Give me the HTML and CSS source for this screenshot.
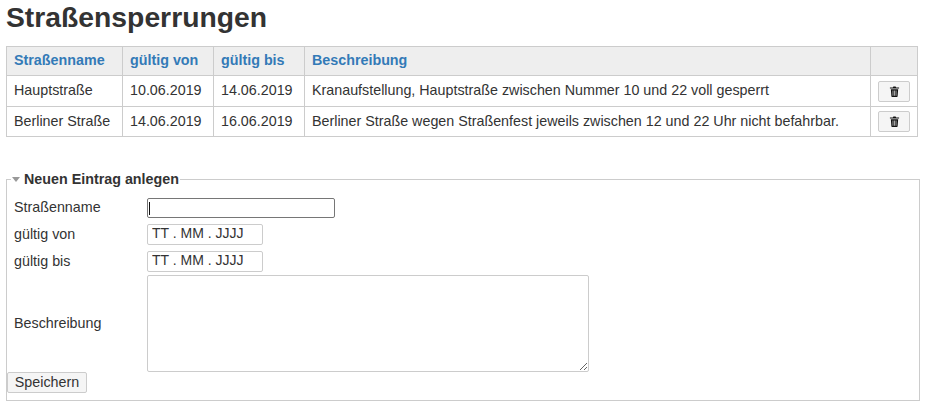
FILE: index.html
```html
<!DOCTYPE html>
<html lang="de">
<head>
<meta charset="utf-8">
<title>Straßensperrungen</title>
<link rel="stylesheet" href="styles.css">
</head>
<body>
<h1 class="title">Straßensperrungen</h1>
<table class="list">
<thead>
<tr><th class="c1">Straßenname</th><th class="c2">gültig von</th><th class="c3">gültig bis</th><th class="c4">Beschreibung</th><th class="c5"></th></tr>
</thead>
<tbody>
<tr><td>Hauptstraße</td><td>10.06.2019</td><td>14.06.2019</td><td>Kranaufstellung, Hauptstraße zwischen Nummer 10 und 22 voll gesperrt</td><td class="act"><button class="del" type="button"><svg class="trash" viewBox="0 0 12 12" width="11" height="11"><path d="M4.2 1.600 4.800.6h2.400l.6 1H11v1.200H1V1.600z"/><path fill-rule="evenodd" d="M2 3.600h8l-.6 7.600a.8.8 0 0 1-.8.8H3.400a.8.8 0 0 1-.8-.8zM4 5v5.500h.7V5zm1.650 0v5.500h.7V5zM7.300 5v5.500H8V5z"/></svg></button></td></tr>
<tr class="last"><td>Berliner Straße</td><td>14.06.2019</td><td>16.06.2019</td><td>Berliner Straße wegen Straßenfest jeweils zwischen 12 und 22 Uhr nicht befahrbar.</td><td class="act"><button class="del" type="button"><svg class="trash" viewBox="0 0 12 12" width="11" height="11"><path d="M4.2 1.600 4.800.6h2.400l.6 1H11v1.200H1V1.600z"/><path fill-rule="evenodd" d="M2 3.600h8l-.6 7.600a.8.8 0 0 1-.8.8H3.400a.8.8 0 0 1-.8-.8zM4 5v5.500h.7V5zm1.650 0v5.500h.7V5zM7.300 5v5.500H8V5z"/></svg></button></td></tr>
</tbody>
</table>
<form>
<fieldset class="box">
<legend class="legend"><span class="arrow"></span>Neuen Eintrag anlegen</legend>
<div class="rows">
<label class="lab first" for="n">Straßenname</label><span class="focus-wrap"><input class="inp wide" id="n" type="text"></span>
<label class="lab date-row" for="v">gültig von</label><input class="inp date date-row" id="v" type="text" value="TT . MM . JJJJ">
<label class="lab date-row" for="b">gültig bis</label><input class="inp date date-row" id="b" type="text" value="TT . MM . JJJJ">
<label class="lab" for="d">Beschreibung</label><textarea class="inp area" id="d"></textarea>
</div>
<button class="save" type="button">Speichern</button>
</fieldset>
</form>
</body>
</html>
```
FILE: styles.css
```css
html, body { margin: 0; padding: 0; }
body {
  padding: 0 8px 0 6px;
  background: #fff;
  color: #333;
  font: 14.3px/20px "Liberation Sans", Arial, sans-serif;
  overflow: hidden;
}
.title {
  margin: 0;
  padding-top: 1px;
  height: 46px;
  box-sizing: border-box;
  font-size: 28.3px;
  line-height: 32px;
  font-weight: bold;
  color: #333;
}
.list {
  border-collapse: collapse;
  width: 912px;
  table-layout: fixed;
  margin: 0;
}
.list th, .list td {
  border: 1px solid #ccc;
  padding: 0 7px 2px;
  text-align: left;
  white-space: nowrap;
}
.list th {
  background: #eee;
  color: #337ab7;
  height: 26px;
  font-weight: bold;
}
.list td { height: 28px; }
.list .last td { height: 27px; }
.c1 { width: 101px; }
.c2, .c3 { width: 76px; }
.c4 { width: 551px; }
.list td.act { padding: 0; text-align: center; }
.del {
  display: inline-flex;
  align-items: center;
  justify-content: center;
  width: 32px;
  height: 21px;
  padding: 0;
  vertical-align: middle;
  background: #f5f5f5;
  border: 1px solid #ccc;
  border-radius: 2px;
}
.trash { fill: #111; display: block; }
.box {
  margin: 34px 0 0 0;
  padding: 11px 0 7px 0;
  border: 1px solid #ccc;
  min-width: 0;
}
.legend {
  margin-left: 4px;
  padding: 0 1px;
  font-weight: bold;
  line-height: 16px;
}
.arrow {
  display: inline-block;
  width: 0;
  height: 0;
  margin: 0 4px 2px 0;
  border: 4px solid transparent;
  border-top: 5px solid #999;
  border-bottom: 0;
  vertical-align: middle;
}
.rows {
  display: grid;
  grid-template-columns: 133px auto;
  row-gap: 3px;
  justify-items: start;
  align-items: center;
  padding-left: 7px;
}
.lab { line-height: 17px; }
.lab.first { padding-bottom: 2px; }
.date-row { margin-top: 3px; }
.inp {
  box-sizing: border-box;
  margin: 0;
  border: 1px solid #ccc;
  border-radius: 2px;
  font: 14px "Liberation Sans", Arial, sans-serif;
  color: #333;
  background: #fff;
  padding: 0 4px;
  outline: none;
}
.inp.date-row { margin-top: 3px; padding-bottom: 3px; }
.focus-wrap { position: relative; display: block; }
.focus-wrap::after {
  content: "";
  position: absolute;
  left: 2px;
  top: 4px;
  width: 1px;
  height: 13px;
  background: #111;
}
.wide { display: block; width: 188px; height: 20px; border-color: #767676; }
.date { width: 116px; height: 21px; }
.area { width: 442px; height: 97px; display: block; }
.save {
  display: block;
  margin: 0;
  width: 80px;
  height: 21px;
  padding: 0 0 2px;
  background: #f5f5f5;
  border: 1px solid #ccc;
  border-radius: 2px;
  color: #333;
  font: 14.3px "Liberation Sans", Arial, sans-serif;
}
```
